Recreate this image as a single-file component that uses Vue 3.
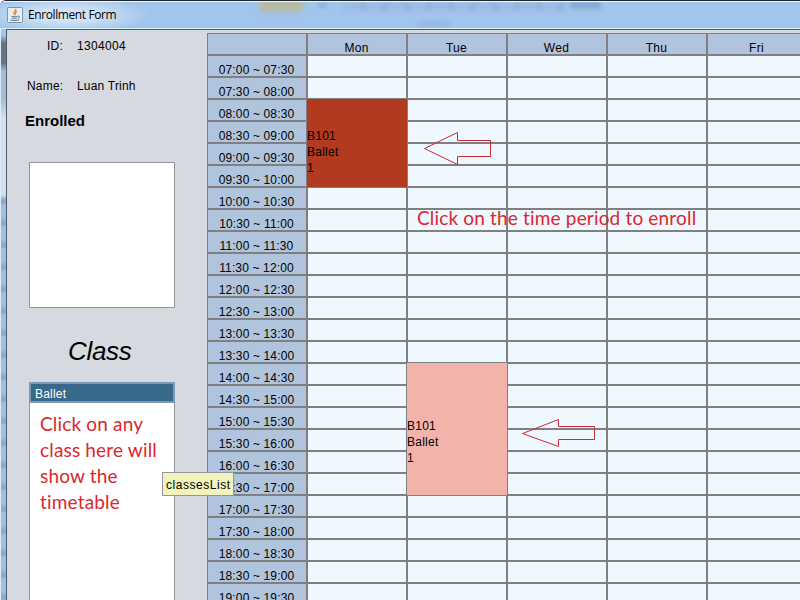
<script setup>
const days = ['Mon', 'Tue', 'Wed', 'Thu', 'Fri']

const clock = (halfHours) =>
  `${String(Math.floor(halfHours / 2)).padStart(2, '0')}:${halfHours % 2 ? '30' : '00'}`

const slots = Array.from({ length: 25 }, (_, i) => `${clock(14 + i)} ~ ${clock(15 + i)}`)

const bookings = [
  { id: 'mon', kind: 'taken', lines: ['B101', 'Ballet', '1'] },
  { id: 'tue', kind: 'open', lines: ['B101', 'Ballet', '1'] },
]
</script>

<template>
  <div class="window">
    <header class="titlebar">
      <i class="ghost ghost-tab"></i>
      <i class="ghost ghost-dot"></i>
      <i class="ghost ghost-ruler"></i>
      <i class="ghost ghost-dark"></i>
      <i class="ghost ghost-label"></i>
      <svg class="app-icon" viewBox="0 0 16 16" width="16" height="16">
        <rect x="0.5" y="0.5" width="15" height="15" rx="1" fill="#e9edf0" stroke="#7f93a3" />
        <path d="M8.600 1.800C9.600 3.800 6 4.600 7 6.400c.3.7 1 1 .8 2M10 4.400C8 5.400 8.200 6.300 8.900 7.400" fill="none" stroke="#e08434" stroke-width="1.200" />
        <path d="M4.500 9.300c1.600.6 4.600.6 6.200 0M5 11c1.500.5 3.700.5 5 0M3.300 12.800c2.700 1 7 .9 9-.2M11 9.200c1.900-.3 1.900 1.500.1 2.100" fill="none" stroke="#53718f" stroke-width="1" />
      </svg>
      <span class="title">Enrollment Form</span>
    </header>

    <div class="body">
      <div class="frame"></div>
      <div class="content">
        <aside class="sidebar">
          <dl class="student">
            <dt>ID:</dt>
            <dd class="number">1304004</dd>
            <dt>Name:</dt>
            <dd>Luan Trinh</dd>
          </dl>
          <h2 class="enrolled">Enrolled</h2>
          <div class="enrolled-list"></div>
          <h1 class="class-title">Class</h1>
          <div class="class-list">
            <div class="class-item">Ballet</div>
            <p class="hint list-hint">Click on any<br />class here will<br />show the<br />timetable</p>
          </div>
        </aside>

        <main class="timetable">
          <div class="cell head"></div>
          <div v-for="day in days" :key="day" class="cell head">{{ day }}</div>
          <template v-for="slot in slots" :key="slot">
            <div class="cell time">{{ slot }}</div>
            <div v-for="day in days" :key="day" class="cell"></div>
          </template>
        </main>

        <div class="overlay">
          <div v-for="b in bookings" :key="b.id" class="booking" :class="b.kind">
            <div v-for="line in b.lines" :key="line">{{ line }}</div>
          </div>
        </div>
      </div>
    </div>

    <svg class="arrow arrow-top" width="68" height="34" viewBox="0 0 68 34">
      <path d="M0.500 16.500L33.500 0.500V8.500H66.500V24.500H33.500V32.500Z" />
    </svg>
    <svg class="arrow arrow-bottom" width="74" height="29" viewBox="0 0 74 29">
      <path d="M0.500 14.500L36.500 0.500V7.500H72.500V20.500H36.500V27.500Z" />
    </svg>
    <p class="hint grid-hint">Click on the time period to enroll</p>
    <div class="tooltip">classesList</div>
  </div>
</template>

<style>
body {
  margin: 0;
  overflow: hidden;
}
</style>

<style scoped>
.window {
  position: relative;
  box-sizing: border-box;
  width: 800px;
  height: 600px;
  overflow: hidden;
  display: flex;
  flex-direction: column;
  background: #a2c5ec;
  border-top: 1px solid #20242e;
  border-top-left-radius: 6px;
  font-family: "Liberation Sans", Arial, sans-serif;
  font-size: 12px;
  color: #000;
}

.titlebar {
  position: relative;
  box-sizing: border-box;
  flex: none;
  height: 28px;
  display: flex;
  align-items: center;
  gap: 5px;
  padding-left: 7px;
  overflow: hidden;
  border-top: 1px solid #f2f7fc;
  border-bottom: 1px solid #d3f3fb;
  background: radial-gradient(ellipse 85px 18px at 66px 13px, #d3e4f7 30%, transparent 100%), #a2c5ec;
}

.title {
  position: relative;
  top: -1px;
  font-family: "Open Sans", "Noto Sans", sans-serif;
  font-size: 12px;
  letter-spacing: -0.4px;
}

.app-icon {
  position: relative;
}

.ghost {
  position: absolute;
  filter: blur(2px);
}

.ghost-tab {
  left: 260px;
  top: -4px;
  width: 43px;
  height: 14px;
  background: #b5bba4;
}

.ghost-dot {
  left: 319px;
  top: 0;
  width: 7px;
  height: 6px;
  background: #8fb0d8;
}

.ghost-ruler {
  left: 343px;
  top: 0;
  width: 222px;
  height: 9px;
  background: repeating-linear-gradient(90deg, #9bbce2 0 18px, #8fb0d6 18px 22px);
}

.ghost-dark {
  left: 570px;
  top: 1px;
  width: 31px;
  height: 5px;
  background: #7f9fc8;
}

.ghost-label {
  left: 417px;
  top: 20px;
  width: 32px;
  height: 4px;
  background: #90b3dc;
}

.body {
  flex: 1;
  min-height: 0;
  display: flex;
}

.frame {
  flex: none;
  width: 5px;
  border-left: 1px solid #dcebf7;
  background:
    linear-gradient(#a9c8e8 0 6px, #6a7480 14px 34px, #a6bdd4 42px 70px, #d5e2ec 90px 165px, transparent 170px),
    repeating-linear-gradient(#a0c0df 0 12px, #8aabcb 17px 20px, #a0c0df 22px);
}

.content {
  position: relative;
  box-sizing: border-box;
  flex: 1;
  min-width: 0;
  display: flex;
  padding-top: 3px;
  border-top: 1px solid #4b5c6a;
  border-left: 1px solid #4b5c6a;
  background: #d6d9df;
  overflow: hidden;
}

.sidebar {
  flex: none;
  box-sizing: border-box;
  width: 200px;
  padding: 5px 32px 0 22px;
  display: flex;
  flex-direction: column;
}

.sidebar > * {
  flex-shrink: 0;
}

.student {
  display: grid;
  grid-template-columns: 36px 1fr;
  column-gap: 14px;
  row-gap: 24px;
  margin: 0;
  margin-left: -2px;
  line-height: 16px;
  letter-spacing: 0.2px;
}

.student dt {
  text-align: right;
  white-space: nowrap;
}

.student dd {
  margin: 0;
}

.student .number {
  letter-spacing: 0.33px;
}

.enrolled {
  margin: 18px 0 0 -4px;
  font-size: 15px;
  line-height: 18px;
}

.enrolled-list {
  box-sizing: border-box;
  width: 146px;
  height: 146px;
  margin-top: 32px;
  background: #fff;
  border: 1px solid #92959e;
}

.class-title {
  margin: 27px 0 0 39px;
  font-size: 26px;
  font-style: italic;
  font-weight: 400;
  line-height: 32px;
  letter-spacing: -0.3px;
}

.class-list {
  box-sizing: border-box;
  width: 146px;
  height: 260px;
  margin-top: 15px;
  background: #fff;
  border: 1px solid #92959e;
}

.class-item {
  box-sizing: border-box;
  height: 21px;
  margin: -1px -1px 0;
  padding: 2px 0 0 4px;
  border: 2px solid #7a9cb8;
  background: #39698a;
  color: #fff;
  line-height: 16px;
  letter-spacing: 0.2px;
}

.hint {
  margin: 0;
  color: #d9272e;
  font-family: Lato, "Open Sans", sans-serif;
  font-size: 19px;
  font-variant-ligatures: none;
  letter-spacing: 0.17px;
}

.list-hint {
  padding: 8px 0 0 10px;
  line-height: 26px;
  white-space: nowrap;
}

.timetable {
  flex: none;
  display: grid;
  grid-template-columns: repeat(6, 100px);
  grid-auto-rows: 22px;
  align-content: start;
}

.cell {
  box-sizing: border-box;
  border: 1px solid #808080;
  background: #f0f8ff;
  text-align: center;
  line-height: 16px;
  padding-top: 6px;
  white-space: nowrap;
}

.head,
.time {
  background: #b0c4de;
}

.head {
  padding: 6px 1px 0 0;
  letter-spacing: 0.3px;
}

.time {
  padding-right: 1px;
  letter-spacing: 0.14px;
}

.overlay {
  position: absolute;
  left: 300px;
  top: 68px;
  display: grid;
  grid-template-columns: 100px 101px;
  grid-template-rows: 90px 174px 134px;
  pointer-events: none;
}

.booking {
  box-sizing: border-box;
  display: flex;
  flex-direction: column;
  justify-content: center;
  line-height: 16px;
  letter-spacing: 0.25px;
  border: 1px solid #808080;
  border-left-width: 0;
}

.taken {
  grid-area: 1 / 1;
  width: 101px;
  padding-top: 18px;
  background: #b13a20;
}

.open {
  grid-area: 3 / 2;
  padding-top: 26px;
  background: #f2b4aa;
}

.arrow {
  position: absolute;
  fill: none;
  stroke: #c92a36;
  stroke-width: 1;
}

.arrow-top {
  left: 424px;
  top: 131px;
}

.arrow-bottom {
  left: 522px;
  top: 418px;
}

.grid-hint {
  position: absolute;
  left: 417px;
  top: 204px;
  line-height: 26px;
  white-space: nowrap;
}

.tooltip {
  position: absolute;
  left: 162px;
  top: 471px;
  box-sizing: border-box;
  width: 72px;
  height: 24px;
  padding-left: 3px;
  border: 1px solid #92959e;
  background: #f2f2bd;
  line-height: 24px;
  letter-spacing: 0.55px;
}
</style>
